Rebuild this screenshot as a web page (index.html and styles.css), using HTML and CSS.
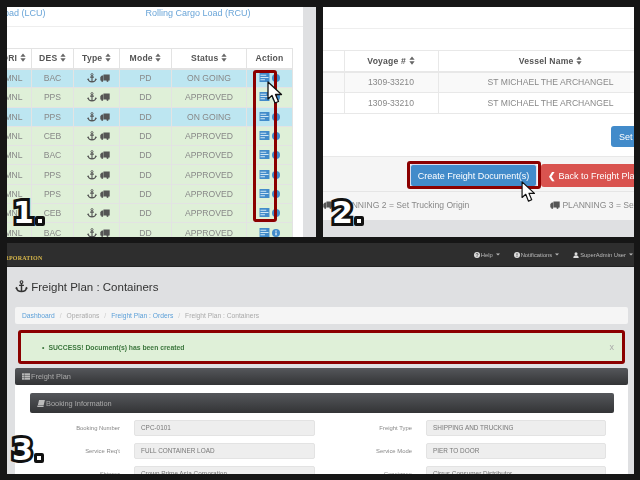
FILE: index.html
```html
<!DOCTYPE html>
<html lang="en">
<head>
    <meta charset="UTF-8">
    <meta name="viewport" content="width=device-width, initial-scale=1.0">
    <title>Freight Plan : Create Freight Documents</title>
    <link rel="stylesheet" href="styles.css">
</head>
<body>
    <svg class="icon-defs" width="0" height="0">
        <symbol id="anchor" viewBox="0 0 16 16">
            <circle cx="8" cy="2.6" r="1.7" fill="none" stroke="currentColor" stroke-width="1.4"/>
            <path d="M8 4v10M5 6.6h6M1.8 9.4c.4 3.2 3 4.8 6.2 4.8s5.8-1.6 6.2-4.8" fill="none" stroke="currentColor" stroke-width="1.8"/>
            <path d="M0 10.6l1.8-2.2 1.8 2.2zM12.4 10.6l1.8-2.2 1.8 2.2z" fill="currentColor"/>
        </symbol>
        <symbol id="truck" viewBox="0 0 16 16">
            <path d="M5.5 2.5h10v9.500h-10zM0.500 9v-2.500l2.500-2.500h2v8h-4.500z" fill="currentColor"/>
            <circle cx="3.500" cy="12.500" r="1.700" fill="currentColor"/>
            <circle cx="12" cy="12.500" r="1.700" fill="currentColor"/>
        </symbol>
        <symbol id="sort" viewBox="0 0 8 12">
            <path d="M0.500 5l3.500-4.500 3.500 4.500zM0.500 7l3.500 4.500 3.500-4.500z" fill="currentColor"/>
        </symbol>
        <symbol id="docs" viewBox="0 0 11 10">
            <rect width="11" height="10" fill="#428bca"/>
            <path d="M1 2.500h6.500M1 5h9M1 7.500h5" stroke="#dff0f8" stroke-width="1"/>
        </symbol>
        <symbol id="info" viewBox="0 0 10 10">
            <circle cx="5" cy="5" r="5" fill="#428bca"/>
            <path d="M5 2v1.300M5 4.300v3.500" stroke="#fff" stroke-width="1.500"/>
        </symbol>
        <symbol id="pointer" viewBox="0 0 16 24">
            <path d="M1 1v17l4-3.500 3 7.500 3.500-1.500-3-7h6z" fill="#fff" stroke="#111" stroke-width="1.300" stroke-linejoin="round"/>
        </symbol>
        <symbol id="help" viewBox="0 0 10 10">
            <circle cx="5" cy="5" r="5" fill="currentColor"/>
            <path d="M3.400 3.900c0-2 3.300-2 3.300-.1 0 1.200-1.700 1.200-1.700 2.400M5 7v1.300" fill="none" stroke="#2e2e2e" stroke-width="1.200"/>
        </symbol>
        <symbol id="notice" viewBox="0 0 10 10">
            <circle cx="5" cy="5" r="5" fill="currentColor"/>
            <path d="M5 2v3.800M5 6.800v1.300" fill="none" stroke="#2e2e2e" stroke-width="1.300"/>
        </symbol>
        <symbol id="user" viewBox="0 0 10 10">
            <circle cx="5" cy="2.800" r="2.500" fill="currentColor"/>
            <path d="M0.500 10c0-3 1.500-4.500 4.500-4.500s4.500 1.500 4.500 4.500z" fill="currentColor"/>
        </symbol>
        <symbol id="caret" viewBox="0 0 6 4">
            <path d="M0 0.500h6l-3 3z" fill="currentColor"/>
        </symbol>
        <symbol id="table" viewBox="0 0 10 8">
            <path d="M0 0h10v8h-10z" fill="currentColor"/>
            <path d="M0 2.700h10M0 5.300h10M3 0v8" stroke="#47494c" stroke-width="0.600"/>
        </symbol>
        <symbol id="book" viewBox="0 0 10 9">
            <path d="M2.500 0h7.500l-1.500 6.500h-7.500zM0.500 7h8l-.3 2h-7.700c-.6-.6-.6-1.400 0-2z" fill="currentColor"/>
        </symbol>
    </svg>

    <div class="collage">
        <section class="shot shot-orders">
            <div class="orders-main">
                <div class="load-tabs">
                    <a>Less Container Load (LCU)</a>
                    <a>Rolling Cargo Load (RCU)</a>
                </div>
                <table class="orders-table">
                    <thead>
                        <tr>
                            <th class="col-ori">ORI <svg class="sort"><use href="#sort"/></svg></th>
                            <th class="col-des">DES <svg class="sort"><use href="#sort"/></svg></th>
                            <th class="col-type">Type <svg class="sort"><use href="#sort"/></svg></th>
                            <th class="col-mode">Mode <svg class="sort"><use href="#sort"/></svg></th>
                            <th class="col-status">Status <svg class="sort"><use href="#sort"/></svg></th>
                            <th class="col-action">Action</th>
                        </tr>
                    </thead>
                    <tbody>
                        <tr class="going"><td>MNL</td><td>BAC</td><td class="type-cell"><svg class="ic"><use href="#anchor"/></svg> <svg class="ic"><use href="#truck"/></svg></td><td>PD</td><td>ON GOING</td><td><svg class="act"><use href="#docs"/></svg> <svg class="act-info"><use href="#info"/></svg></td></tr>
                        <tr class="ok"><td>MNL</td><td>PPS</td><td class="type-cell"><svg class="ic"><use href="#anchor"/></svg> <svg class="ic"><use href="#truck"/></svg></td><td>DD</td><td>APPROVED</td><td><svg class="act"><use href="#docs"/></svg> <svg class="act-info"><use href="#info"/></svg></td></tr>
                        <tr class="going"><td>MNL</td><td>PPS</td><td class="type-cell"><svg class="ic"><use href="#anchor"/></svg> <svg class="ic"><use href="#truck"/></svg></td><td>DD</td><td>ON GOING</td><td><svg class="act"><use href="#docs"/></svg> <svg class="act-info"><use href="#info"/></svg></td></tr>
                        <tr class="ok"><td>MNL</td><td>CEB</td><td class="type-cell"><svg class="ic"><use href="#anchor"/></svg> <svg class="ic"><use href="#truck"/></svg></td><td>DD</td><td>APPROVED</td><td><svg class="act"><use href="#docs"/></svg> <svg class="act-info"><use href="#info"/></svg></td></tr>
                        <tr class="ok"><td>MNL</td><td>BAC</td><td class="type-cell"><svg class="ic"><use href="#anchor"/></svg> <svg class="ic"><use href="#truck"/></svg></td><td>DD</td><td>APPROVED</td><td><svg class="act"><use href="#docs"/></svg> <svg class="act-info"><use href="#info"/></svg></td></tr>
                        <tr class="ok"><td>MNL</td><td>PPS</td><td class="type-cell"><svg class="ic"><use href="#anchor"/></svg> <svg class="ic"><use href="#truck"/></svg></td><td>DD</td><td>APPROVED</td><td><svg class="act"><use href="#docs"/></svg> <svg class="act-info"><use href="#info"/></svg></td></tr>
                        <tr class="ok"><td>MNL</td><td>PPS</td><td class="type-cell"><svg class="ic"><use href="#anchor"/></svg> <svg class="ic"><use href="#truck"/></svg></td><td>DD</td><td>APPROVED</td><td><svg class="act"><use href="#docs"/></svg> <svg class="act-info"><use href="#info"/></svg></td></tr>
                        <tr class="ok"><td>MNL</td><td>CEB</td><td class="type-cell"><svg class="ic"><use href="#anchor"/></svg> <svg class="ic"><use href="#truck"/></svg></td><td>DD</td><td>APPROVED</td><td><svg class="act"><use href="#docs"/></svg> <svg class="act-info"><use href="#info"/></svg></td></tr>
                        <tr class="ok"><td>MNL</td><td>BAC</td><td class="type-cell"><svg class="ic"><use href="#anchor"/></svg> <svg class="ic"><use href="#truck"/></svg></td><td>DD</td><td>APPROVED</td><td><svg class="act"><use href="#docs"/></svg> <svg class="act-info"><use href="#info"/></svg></td></tr>
                    </tbody>
                </table>
            </div>
            <div class="orders-strip"></div>
        </section>

        <section class="shot shot-voyage">
            <div class="voyage-main">
                <div class="voyage-tabs"></div>
                <table class="voyage-table">
                    <thead>
                        <tr>
                            <th class="col-blank"></th>
                            <th class="col-voyage">Voyage # <svg class="sort"><use href="#sort"/></svg></th>
                            <th class="col-vessel">Vessel Name <svg class="sort"><use href="#sort"/></svg></th>
                        </tr>
                    </thead>
                    <tbody>
                        <tr class="odd"><td></td><td>1309-33210</td><td>ST MICHAEL THE ARCHANGEL</td></tr>
                        <tr><td></td><td>1309-33210</td><td>ST MICHAEL THE ARCHANGEL</td></tr>
                    </tbody>
                </table>
                <div class="set-row"><button class="btn btn-blue">Set Trucking</button></div>
            </div>
            <div class="voyage-footer">
                <div class="footer-buttons">
                    <button class="btn btn-blue btn-create">Create Freight Document(s)</button>
                    <button class="btn btn-red"><b>&#10094;</b> Back to Freight Plan</button>
                </div>
                <div class="legend">
                    <span class="legend-item legend-two"><svg class="ic"><use href="#truck"/></svg> PLANNING 2 = Set Trucking Origin</span>
                    <span class="legend-item"><svg class="ic"><use href="#truck"/></svg> PLANNING 3 = Set Trucking Destination</span>
                </div>
            </div>
            <div class="voyage-strip"></div>
        </section>

        <section class="shot shot-plan">
            <nav class="topbar">
                <span class="brand">CORPORATION</span>
                <div class="topbar-menu">
                    <span class="nav-item"><svg class="nav-ic"><use href="#help"/></svg>Help<svg class="nav-caret"><use href="#caret"/></svg></span>
                    <span class="nav-item"><svg class="nav-ic"><use href="#notice"/></svg>Notifications<svg class="nav-caret"><use href="#caret"/></svg></span>
                    <span class="nav-item"><svg class="nav-ic"><use href="#user"/></svg>SuperAdmin User<svg class="nav-caret"><use href="#caret"/></svg></span>
                </div>
            </nav>
            <div class="plan-body">
                <h1 class="plan-title"><svg class="title-icon"><use href="#anchor"/></svg> Freight Plan : Containers</h1>
                <ol class="crumbs">
                    <li><a>Dashboard</a></li>
                    <li>Operations</li>
                    <li><a>Freight Plan : Orders</a></li>
                    <li>Freight Plan : Containers</li>
                </ol>
                <div class="success">
                    <ul><li>SUCCESS! Document(s) has been created</li></ul>
                    <span class="success-close">x</span>
                </div>
                <div class="bar bar-plan"><svg class="bar-ic"><use href="#table"/></svg> Freight Plan</div>
                <div class="plan-card">
                    <div class="bar bar-booking"><svg class="bar-ic"><use href="#book"/></svg> Booking Information</div>
                    <div class="booking-form">
                        <label>Booking Number</label><div class="field">CPC-0101</div>
                        <label>Freight Type</label><div class="field">SHIPPING AND TRUCKING</div>
                        <label>Service Req't</label><div class="field">FULL CONTAINER LOAD</div>
                        <label>Service Mode</label><div class="field">PIER TO DOOR</div>
                        <label>Shipper</label><div class="field">Crown Prime Asia Corporation</div>
                        <label>Consignee</label><div class="field">Cirrus Consumer Distributor</div>
                    </div>
                </div>
            </div>
        </section>

        <!-- annotations drawn over the screenshots -->
        <div class="mark mark-action"></div>
        <div class="mark mark-create"></div>
        <div class="mark mark-success"></div>
        <svg class="pointer pointer-action"><use href="#pointer"/></svg>
        <svg class="pointer pointer-create"><use href="#pointer"/></svg>
        <span class="step step-one">1<i></i></span>
        <span class="step step-two">2<i></i></span>
        <span class="step step-three">3<i></i></span>
    </div>
</body>
</html>
```

FILE: styles.css
```css
* {
    box-sizing: border-box;
}
html, body {
    margin: 0;
    height: 100%;
    overflow: hidden;
}
body {
    background-color: #161616;
    font-family: "Liberation Sans", Arial, sans-serif;
}
.icon-defs {
    position: absolute;
}
.collage {
    position: relative;
    width: 640px;
    height: 480px;
    padding: 7px 6px 6px 7px;
    display: grid;
    grid-template-columns: 309px 311px;
    grid-template-rows: 230px 231px;
    column-gap: 7px;
    row-gap: 6px;
}
.shot {
    overflow: hidden;
    filter: blur(0.4px);
    min-width: 0;
}

/* shot 1 */
.shot-orders {
    display: flex;
    background-color: #dfe0e2;
}
.orders-main {
    width: 296px;
    flex: none;
    background-color: #fff;
    overflow: hidden;
}
.load-tabs {
    height: 20px;
    border-bottom: 1px solid #eee;
    display: flex;
    gap: 100px;
    margin-left: -71px;
    font-size: 9px;
    line-height: 13px;
    color: #6aa5d8;
    white-space: nowrap;
}
.orders-table {
    margin: 21px 0 0 -12px;
    border-collapse: collapse;
    table-layout: fixed;
    width: 298px;
    font-size: 8.6px;
    color: #888;
}
.orders-table th, .orders-table td {
    border: 1px solid #e3e3e3;
    padding: 0;
    text-align: center;
    white-space: nowrap;
}
.orders-table th {
    height: 20px;
    color: #555;
    border-bottom-width: 2px;
    letter-spacing: 0.2px;
}
.orders-table td {
    height: 19.3px;
}
.orders-table .type-cell {
    padding-left: 4px;
}
.col-ori { width: 36px; }
.col-des { width: 42px; }
.col-type { width: 46px; }
.col-mode { width: 52px; }
.col-status { width: 75px; }
.col-action { width: 46px; }
.going td {
    background-color: #bde6f1;
}
.ok td {
    background-color: #dff0d8;
}
.sort {
    width: 6px;
    height: 9px;
    vertical-align: -1px;
    color: #666;
}
.ic {
    width: 10px;
    height: 10px;
    vertical-align: -2px;
    color: #555;
}
.act {
    width: 11px;
    height: 9px;
    vertical-align: -1px;
}
.act-info {
    width: 8px;
    height: 8px;
    vertical-align: -1px;
}
.orders-strip {
    flex: 1;
}

/* shot 2 */
.shot-voyage {
    display: flex;
    flex-direction: column;
    background-color: #fff;
    color: #888;
}
.voyage-main {
    height: 149px;
    overflow: hidden;
}
.voyage-tabs {
    height: 22px;
    border-bottom: 1px solid #eee;
}
.voyage-table {
    margin-top: 21px;
    border-collapse: collapse;
    table-layout: fixed;
    width: 340px;
    font-size: 8.6px;
}
.voyage-table th, .voyage-table td {
    border-top: 1px solid #e8e8e8;
    border-bottom: 1px solid #e8e8e8;
    border-right: 1px solid #e8e8e8;
    padding: 0;
    text-align: center;
    white-space: nowrap;
    height: 21px;
}
.voyage-table th {
    color: #555;
    border-bottom-width: 2px;
    letter-spacing: 0.2px;
}
.col-blank { width: 21px; }
.col-voyage { width: 94px; }
.col-vessel { width: 225px; }
.odd td {
    background-color: #f9f9f9;
}
.set-row {
    padding: 12px 0 0 288px;
    display: flex;
    white-space: nowrap;
}
.btn {
    flex: none;
    border: none;
    border-radius: 3px;
    color: #fff;
    font-family: inherit;
    font-size: 9px;
    white-space: nowrap;
}
.btn-blue {
    background-color: #428bca;
}
.set-row .btn {
    height: 21px;
    width: 70px;
    padding: 0 0 0 8px;
    text-align: left;
}
.voyage-footer {
    height: 64px;
    background-color: #f5f5f5;
    border-top: 1px solid #e8e8e8;
    overflow: hidden;
}
.footer-buttons {
    display: flex;
    gap: 4px;
    height: 35px;
    padding: 7px 0 0 87px;
    border-bottom: 1px solid #e5e5e5;
    white-space: nowrap;
}
.btn-create {
    width: 127px;
    height: 23px;
    padding: 0;
    border: 1px solid #dde;
}
.btn-red {
    width: 110px;
    height: 23px;
    background-color: #d9534f;
    text-align: left;
    padding: 0 0 0 7px;
}
.legend {
    display: flex;
    padding-top: 6px;
    font-size: 8.6px;
    line-height: 14px;
    color: #888;
    white-space: nowrap;
}
.legend-item {
    flex: none;
}
.legend-two {
    width: 227px;
}
.voyage-strip {
    flex: 1;
    background-color: #dfe0e2;
}

/* shot 3 */
.shot-plan {
    grid-column: 1 / 3;
    display: flex;
    flex-direction: column;
    background-color: #dfe0e2;
}
.topbar {
    height: 24px;
    flex: none;
    background-color: #2e2e2e;
    display: flex;
    align-items: center;
    justify-content: space-between;
    border-bottom: 1px solid #222;
}
.brand {
    margin-left: -12px;
    padding-top: 7px;
    font-family: "Liberation Serif", serif;
    font-weight: bold;
    font-size: 6px;
    letter-spacing: 0.2px;
    color: #d9b84a;
}
.topbar-menu {
    display: flex;
    gap: 14px;
    margin-right: 1px;
    font-size: 5.8px;
    color: #bbb;
}
.nav-item {
    display: inline-flex;
    align-items: center;
    gap: 1px;
}
.nav-ic {
    width: 6px;
    height: 6px;
    color: #ddd;
}
.nav-caret {
    width: 4px;
    height: 3px;
    margin-left: 2px;
}
.plan-body {
    flex: 1;
    padding: 10px 6px 0 8px;
    overflow: hidden;
}
.plan-title {
    margin: 0;
    height: 30px;
    font-size: 11.5px;
    font-weight: normal;
    line-height: 20px;
    color: #333;
}
.title-icon {
    width: 13px;
    height: 13px;
    vertical-align: -2px;
    color: #333;
}
.crumbs {
    margin: 0;
    padding: 0 7px;
    height: 17px;
    list-style: none;
    display: flex;
    align-items: center;
    background-color: #f5f5f5;
    border-radius: 2px;
    font-size: 6.7px;
    color: #aaa;
}
.crumbs a {
    color: #5b9fd8;
}
.crumbs li + li::before {
    content: "/";
    padding: 0 5px;
    color: #ccc;
}
.success {
    margin: 7px 3px 0;
    height: 32px;
    background-color: #dff0d8;
    display: flex;
    align-items: center;
    justify-content: space-between;
    padding: 0 11px 0 0;
    font-size: 6.8px;
    font-weight: bold;
    color: #3c763d;
}
.success ul {
    margin: 0;
    padding-left: 24px;
    list-style: none;
}
.success li::before {
    content: "\2022";
    margin-right: 4px;
}
.success-close {
    font-weight: normal;
    font-size: 9px;
    color: #aaa;
}
.bar {
    color: #aaa;
    font-size: 7.4px;
    display: flex;
    align-items: center;
    gap: 1px;
    background: linear-gradient(#55575b, #333436);
    border-radius: 2px;
    padding-left: 7px;
}
.bar-ic {
    width: 8px;
    height: 7px;
    color: #bbb;
}
.bar-plan {
    margin-top: 5px;
    height: 17px;
}
.plan-card {
    background-color: #fff;
    padding: 8px 14px 0 15px;
    height: 100px;
    overflow: hidden;
}
.bar-booking {
    height: 20px;
}
.booking-form {
    margin-top: 7px;
    display: grid;
    grid-template-columns: 104px 181px 111px 180px;
    row-gap: 7px;
    font-size: 5.9px;
}
.booking-form label {
    padding-right: 14px;
    text-align: right;
    color: #888;
    line-height: 16px;
}
.field {
    height: 16px;
    background-color: #eee;
    border: 1px solid #e3e3e3;
    border-radius: 2px;
    padding-left: 6px;
    font-size: 6.4px;
    line-height: 14px;
    color: #777;
}

/* annotations */
.mark {
    position: absolute;
    border: 3px solid #8b0000;
    border-radius: 3px;
}
.mark-action {
    left: 253px;
    top: 70px;
    width: 24px;
    height: 152px;
}
.mark-create {
    left: 407px;
    top: 161px;
    width: 134px;
    height: 28px;
}
.mark-success {
    left: 18px;
    top: 330px;
    width: 607px;
    height: 34px;
}
.pointer {
    position: absolute;
}
.pointer-action {
    left: 267px;
    top: 81px;
    width: 16px;
    height: 24px;
}
.pointer-create {
    left: 521px;
    top: 181px;
    width: 15px;
    height: 22px;
}
.step {
    position: absolute;
    font-family: "DejaVu Sans", sans-serif;
    font-weight: bold;
    font-size: 30px;
    line-height: 30px;
    color: #fff;
    -webkit-text-stroke: 6px #111;
    paint-order: stroke fill;
}
.step i {
    display: inline-block;
    width: 10px;
    height: 10px;
    margin-bottom: -3px;
    margin-left: 1px;
    background-color: #fff;
    border: 3px solid #111;
    border-radius: 2px;
}
.step-one {
    left: 13px;
    top: 198px;
}
.step-two {
    left: 332px;
    top: 198px;
}
.step-three {
    left: 12px;
    top: 435px;
}
```
